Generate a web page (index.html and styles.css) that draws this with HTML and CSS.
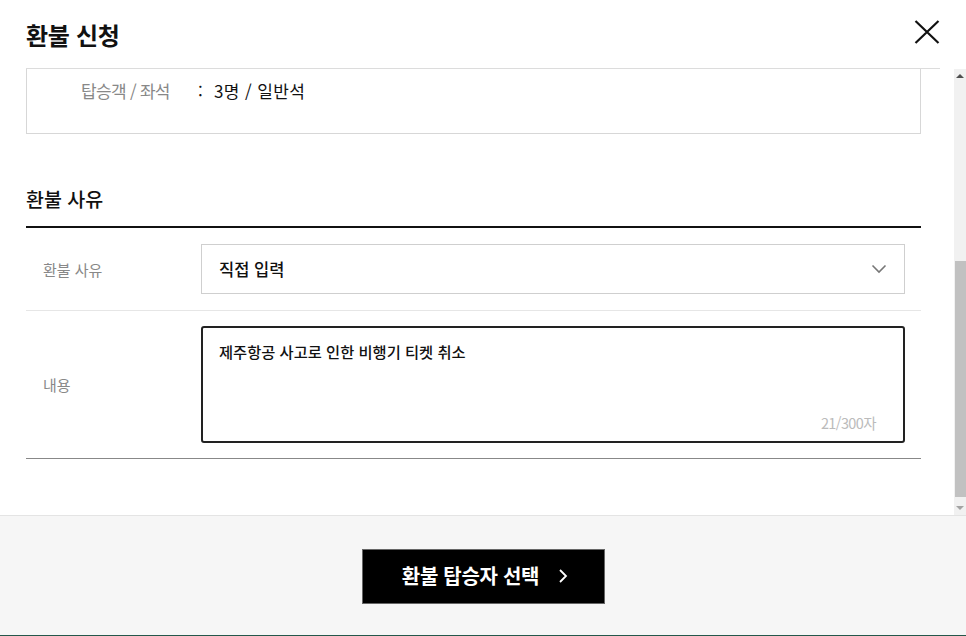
FILE: index.html
```html
<!DOCTYPE html>
<html lang="ko">
<head>
<meta charset="utf-8">
<title>환불 신청</title>
<link rel="stylesheet" href="styles.css">
</head>
<body>
<div class="modal">
  <header class="header">
    <h1 class="title">환불 신청</h1>
    <button class="close" aria-label="닫기">
      <svg width="26" height="24" viewBox="0 0 26 24"><path d="M1.5 1 L24.5 23 M24.5 1 L1.5 23" stroke="#111" stroke-width="2.2" fill="none"/></svg>
    </button>
  </header>
  <div class="body">
    <div class="scroll">
      <div class="info-box">
        <span class="info-label">탑승객 / 좌석</span>
        <span class="info-colon">:</span>
        <span class="info-value">3명 / 일반석</span>
      </div>
      <h2 class="section-title">환불 사유</h2>
      <div class="form">
        <div class="row">
          <div class="row-label">환불 사유</div>
          <div class="select">
            <span>직접 입력</span>
            <svg width="16" height="10" viewBox="0 0 16 10"><path d="M1.5 1.5 L8 8 L14.5 1.5" stroke="#777" stroke-width="1.6" fill="none"/></svg>
          </div>
        </div>
        <div class="row row-last">
          <div class="row-label">내용</div>
          <div class="textarea">
            <div class="textarea-text">제주항공 사고로 인한 비행기 티켓 취소</div>
            <div class="counter">21/300자</div>
          </div>
        </div>
      </div>
    </div>
    <div class="scrollbar">
      <div class="sb-arrow sb-up"></div>
      <div class="sb-track">
        <div class="sb-thumb"></div>
      </div>
      <div class="sb-arrow sb-down"></div>
    </div>
  </div>
  <footer class="footer">
    <button class="primary">환불 탑승자 선택
      <svg width="10" height="16" viewBox="0 0 10 16"><path d="M2 2 L8 8 L2 14" stroke="#fff" stroke-width="1.8" fill="none"/></svg>
    </button>
  </footer>
</div>
</body>
</html>
```

FILE: styles.css
```css
* { box-sizing: border-box; }
html, body { margin: 0; padding: 0; background: #fff; }
body {
  font-family: "Noto Sans CJK KR", "Noto Sans", sans-serif;
  color: #111;
  width: 966px;
  height: 636px;
  overflow: hidden;
}
.modal {
  display: flex;
  flex-direction: column;
  height: 636px;
}
.header {
  height: 69px;
  margin: 0 26px;
  border-bottom: 1px solid #dcdcdc;
  display: flex;
  align-items: center;
  justify-content: space-between;
}
.title {
  margin: 0;
  font-size: 24px;
  font-weight: 700;
  letter-spacing: -0.3px;
  line-height: 32px;
  padding-top: 2px;
}
.close {
  border: 0;
  background: none;
  padding: 0;
  display: flex;
  cursor: pointer;
  margin-top: -4px;
}
.body {
  height: 446px;
  display: flex;
}
.scroll {
  flex: 1;
  padding: 0 33px 0 26px;
}
.info-box {
  height: 65px;
  border: 1px solid #d7d7d7;
  border-top: 0;
  display: flex;
  align-items: flex-start;
  padding: 10px 0 0 54px;
  line-height: 24px;
}
.info-label { color: #888; width: 117px; font-size: 17px; letter-spacing: -0.7px; }
.info-colon { width: 16px; color: #111; font-size: 17px; }
.info-value { color: #111; font-size: 17px; font-weight: 400; letter-spacing: 0.4px; }
.section-title {
  margin: 0;
  padding: 52px 0 14px;
  font-size: 19.5px;
  font-weight: 500;
  line-height: 26px;
  border-bottom: 2px solid #111;
}
.row {
  display: flex;
  align-items: center;
  padding: 16px 16px 16px 0;
  border-bottom: 1px solid #e6e6e6;
}
.row-last {
  padding: 15px 16px 15px 0;
  border-bottom: 1px solid #888;
}
.row-label {
  width: 175px;
  padding-left: 17px;
  font-size: 15px;
  color: #888;
}
.select {
  flex: 1;
  height: 50px;
  border: 1px solid #cfcfcf;
  display: flex;
  align-items: center;
  justify-content: space-between;
  padding: 0 17px 0 17px;
  font-size: 16.5px;
  font-weight: 500;
}
.textarea {
  flex: 1;
  height: 117px;
  border: 2px solid #222;
  border-radius: 3px;
  display: flex;
  flex-direction: column;
  justify-content: space-between;
  padding: 11px 27px 8px 16px;
}
.textarea-text {
  font-size: 15.3px;
  font-weight: 500;
  line-height: 24px;
}
.counter {
  align-self: flex-end;
  font-size: 14.5px;
  color: #bbb;
  letter-spacing: -0.6px;
}
.scrollbar {
  width: 12px;
  background: #f1f1f1;
  display: flex;
  flex-direction: column;
}
.sb-arrow {
  height: 14px;
  display: flex;
  align-items: center;
  justify-content: center;
}
.sb-up::before {
  content: "";
  border-left: 4px solid transparent;
  border-right: 4px solid transparent;
  border-bottom: 4px solid #505050;
}
.sb-down::before {
  content: "";
  border-left: 4px solid transparent;
  border-right: 4px solid transparent;
  border-top: 4px solid #a3a3a3;
}
.sb-track {
  flex: 1;
  display: flex;
  flex-direction: column;
  justify-content: flex-end;
  padding: 0 0 4px 1px;
}
.sb-thumb {
  height: 236px;
  background: #c1c1c1;
}
.footer {
  flex: 1;
  background: #f6f6f6;
  border-top: 1px solid #e4e4e4;
  border-bottom: 1px solid #24574a;
  display: flex;
  justify-content: center;
  padding-top: 33px;
}
.primary {
  width: 243px;
  height: 55px;
  background: #000;
  border: 1px solid #666;
  color: #fff;
  font-family: inherit;
  font-size: 20px;
  font-weight: 700;
  letter-spacing: -0.3px;
  display: flex;
  align-items: center;
  justify-content: center;
  gap: 19px;
  padding: 0 0 2px 4px;
  cursor: pointer;
}
```
